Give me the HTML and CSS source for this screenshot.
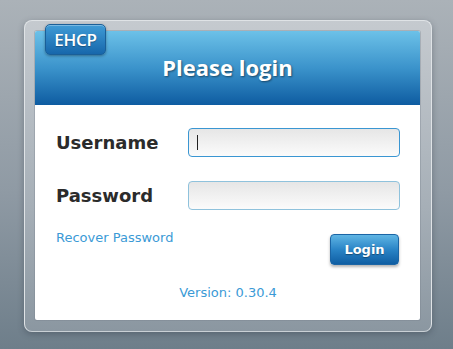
FILE: index.html
```html
<!DOCTYPE html>
<html>
<head>
<meta charset="utf-8">
<link rel="stylesheet" href="styles.css">
</head>
<body>
<div class="frame">
  <div class="panel">
    <div class="badge">EHCP</div>
    <div class="header"><h1 class="title">Please login</h1></div>
    <form class="form">
      <div class="fields">
        <label class="label">Username</label>
        <div class="input focused"><span class="caret"></span></div>
        <label class="label">Password</label>
        <div class="input"></div>
      </div>
      <div class="actions">
        <a class="link">Recover Password</a>
        <button type="button" class="btn">Login</button>
      </div>
      <div class="version">Version: 0.30.4</div>
    </form>
  </div>
</div>
</body>
</html>
```
FILE: styles.css
```css
html, body { margin: 0; height: 100%; }
body {
  background: linear-gradient(#abb2b8 0%, #8f9aa4 55%, #6e7e8a 100%);
  font-family: "DejaVu Sans", Verdana, sans-serif;
  padding-top: 20px;
  box-sizing: border-box;
}
.frame {
  margin-left: 24px;
  width: 408px;
  height: 312px;
  box-sizing: border-box;
  border-radius: 8px;
  border: 1px solid #dfe3e6;
  border-bottom-color: #c9d0d5;
  background: linear-gradient(#c5cacf, #a6afb7 60%, #8b97a1);
  padding: 10px 11px 11px 10px;
  box-shadow: 0 2px 6px rgba(40, 50, 60, 0.35);
}
.panel {
  position: relative;
  background: #fff;
  height: 289px;
  border-radius: 2px;
  box-shadow: 0 0 0 1px rgba(120, 130, 140, 0.35);
}
.badge {
  position: absolute;
  left: 10px;
  top: -7px;
  width: 61px;
  height: 31px;
  box-sizing: border-box;
  border-radius: 5px;
  background: linear-gradient(#3f9bd6, #1767ab);
  border: 1px solid #1a5f98;
  box-shadow: 0 1px 3px rgba(0, 0, 0, 0.35), inset 0 1px 0 rgba(255,255,255,0.3);
  color: #fff;
  font-family: "Open Sans", sans-serif;
  font-size: 17px;
  font-weight: 600;
  letter-spacing: -0.3px;
  line-height: 29px;
  text-align: center;
  text-shadow: 0 1px 1px rgba(0,0,0,0.3);
}
.header {
  height: 74px;
  background: linear-gradient(#6cc1e8 0%, #3b93cb 50%, #0e5ca1 100%);
  border-radius: 2px 2px 0 0;
  box-sizing: border-box;
  padding-top: 21px;
}
.title {
  margin: 0;
  text-align: center;
  color: #fff;
  font-family: "Open Sans", sans-serif;
  font-size: 22px;
  font-weight: bold;
  line-height: 30px;
  text-shadow: 1px 1px 2px rgba(0, 0, 0, 0.45);
}
.form { padding: 23px 20px 0 21px; }
.fields {
  display: grid;
  grid-template-columns: 132px 212px;
  row-gap: 24px;
  align-items: center;
}
.label {
  font-size: 18px;
  font-weight: bold;
  color: #2b2b2b;
}
.input {
  height: 29px;
  box-sizing: border-box;
  border: 1px solid #8fc2dc;
  border-radius: 4px;
  background: linear-gradient(#e6e6e6, #fbfbfb);
  position: relative;
}
.input.focused { border-color: #3a96d2; }
.caret {
  position: absolute;
  left: 8px;
  top: 6px;
  width: 1px;
  height: 15px;
  background: #222;
}
.actions {
  display: flex;
  justify-content: space-between;
  align-items: flex-start;
  margin-top: 21px;
}
.link {
  color: #3b9ad6;
  font-size: 13px;
  margin-top: -1px;
}
.btn {
  width: 69px;
  height: 31px;
  margin-top: 3px;
  margin-right: 1px;
  border-radius: 4px;
  border: 1px solid #1b65a5;
  background: linear-gradient(#5fb5e4, #2a84c6 50%, #0f5ea3);
  color: #fff;
  font-family: "DejaVu Sans", Verdana, sans-serif;
  font-weight: bold;
  font-size: 13px;
  text-shadow: 0 1px 1px rgba(0,0,0,0.35);
  box-shadow: 0 2px 3px rgba(0,0,0,0.3);
  padding: 0;
}
.version {
  text-align: center;
  color: #3b9ad6;
  font-size: 13px;
  margin-top: 20px;
}
```
